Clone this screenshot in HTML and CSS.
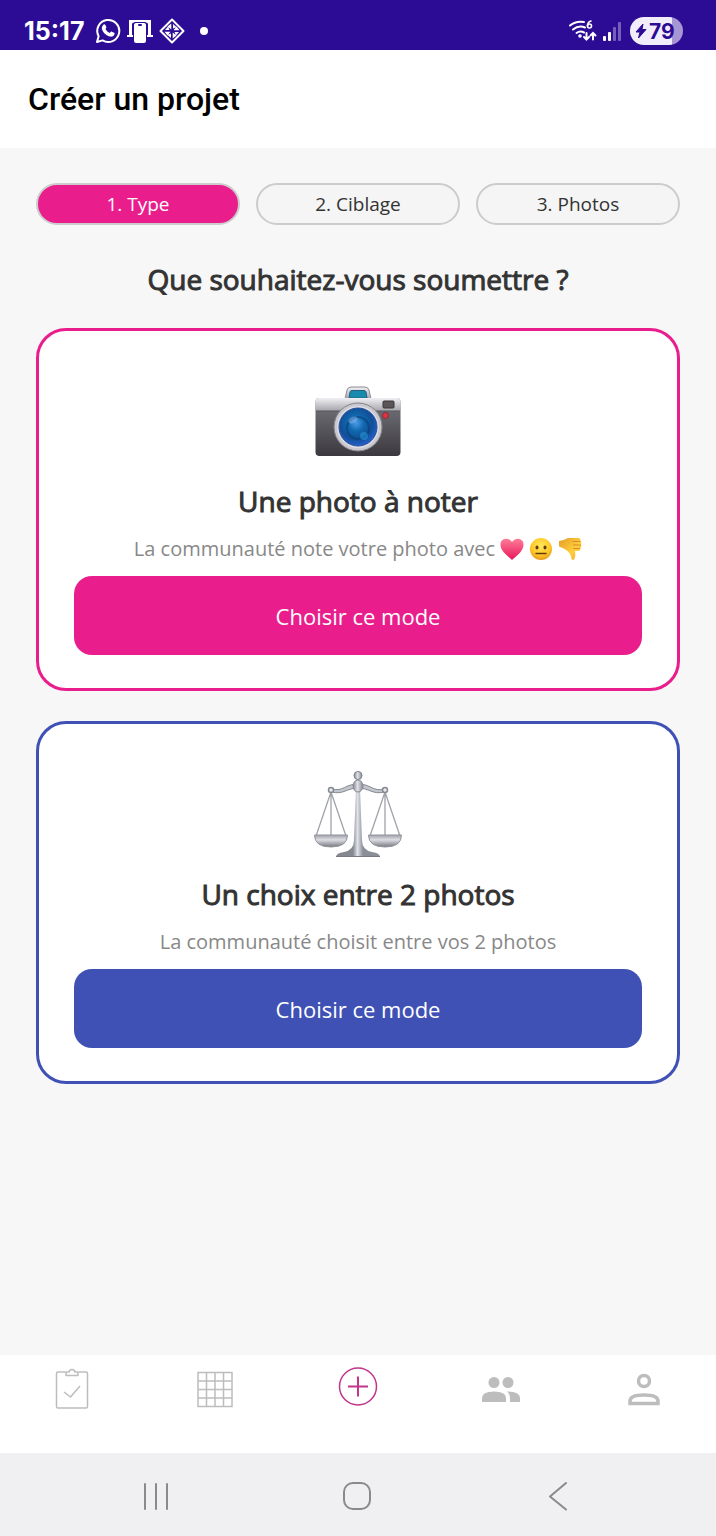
FILE: index.html
```html
<!DOCTYPE html>
<html lang="fr">
<head>
  <meta charset="UTF-8">
  <meta name="viewport" content="width=device-width, initial-scale=1.0">
  <title>Créer un projet</title>
  <link rel="stylesheet" href="styles.css">
</head>
<body>
  <!-- Status bar -->
  <div class="status-bar">
    <div class="status-left">
      <span class="clock">15:17</span>
      <svg width="26" height="26" viewBox="0 0 26 26" fill="none" aria-hidden="true">
        <path d="M2 24l1.600-5.800A11 11 0 1 1 7.600 22.400z" stroke="#fff" stroke-width="2" stroke-linejoin="round"/>
        <path d="M8.600 6.500c.6-.5 1.400-.4 1.700.3l1 2.300c.2.500 0 1-.8 1.900 1.100 2 2.400 3.100 4.400 4 .9-1.200 1.300-1.600 1.900-1.300l2.300 1.100c.7.400.6 1.100.2 2-.6 1.400-2.500 2.200-4.200 1.800-3.800-.9-7.300-4.200-8.200-7.600-.4-1.700.5-3.500 1.700-4.500z" fill="#fff"/>
      </svg>
      <svg width="26" height="26" viewBox="0 0 26 26" aria-hidden="true">
        <path d="M2 2h22v15h2v2H0v-2h2z" fill="#fff"/>
        <path d="M5 17V6q0-1 1-1h14q1 0 1 1v11h-1V8H6v9z" fill="#2c0c94"/>
        <rect x="6" y="4" width="14" height="22" rx="2" fill="#2c0c94"/>
        <rect x="7" y="5" width="12" height="20" rx="2" fill="#fff"/>
        <rect x="11" y="6" width="4" height="2" rx="1" fill="#2c0c94"/>
      </svg>
      <svg width="26" height="26" viewBox="0 0 26 26" aria-hidden="true">
        <path d="M13 1.500L24.500 13 13 24.500 1.500 13z" fill="none" stroke="#fff" stroke-width="2" stroke-linejoin="round"/>
        <path d="M12.300 5.500v6L8.500 8.500zM14 6l3.500 3-3.500 1.500zM20.500 12.300h-6l3-3.800zM20 14l-3 3.500-1.500-3.500zM13.700 20.500v-6l3.800 3zM12 20l-3.500-3 3.500-1.500zM5.500 13.700h6l-3 3.800zM6 12l3-3.500 1.500 3.500z" fill="#fff"/>
      </svg>
      <span class="more-dot"></span>
    </div>
    <div class="status-right">
      <svg width="30" height="24" viewBox="0 0 30 24" fill="none" aria-hidden="true">
        <g stroke="#fff" stroke-width="2" stroke-linecap="round">
          <path d="M2 6.500Q8 1.500 16 3"/>
          <path d="M5 10.500Q10.500 6 17 8.500"/>
          <path d="M8.500 14Q12 11.500 16 13.500"/>
          <path d="M18.500 14v6.500m-2.500-2.500l2.500 2.500 2.500-2.500M25 20.500V14m-2.500 2.500L25 14l2.500 2.500"/>
          <path d="M23 2Q19.500 3 19.500 7" stroke-width="1.600"/>
        </g>
        <circle cx="21.500" cy="7" r="2" stroke="#fff" stroke-width="1.600"/>
        <circle cx="12" cy="17" r="1.800" fill="#fff"/>
      </svg>
      <svg width="20" height="22" viewBox="0 0 20 22" fill="#fff" aria-hidden="true">
        <rect x="1" y="16" width="3" height="5" rx="1"/>
        <rect x="6" y="12" width="3" height="9" rx="1"/>
        <rect x="11" y="7" width="3" height="14" rx="1" opacity=".35"/>
        <rect x="16" y="2" width="3" height="19" rx="1" opacity=".35"/>
      </svg>
      <span class="battery">
        <svg width="12" height="16" viewBox="0 0 12 16" aria-hidden="true">
          <path d="M8 1L1 9h4L3.500 15 11 6.500H7z" fill="#2c0c94" stroke="#2c0c94" stroke-linejoin="round"/>
        </svg>
        79
      </span>
    </div>
  </div>

  <header class="app-header">
    <h1>Créer un projet</h1>
  </header>

  <main>
    <ol class="steps">
      <li class="step active" aria-current="step">1. Type</li>
      <li class="step">2. Ciblage</li>
      <li class="step">3. Photos</li>
    </ol>

    <h2 class="question">Que souhaitez-vous soumettre ?</h2>

    <!-- Single photo mode -->
    <section class="mode-card rating">
      <svg class="mode-icon" viewBox="0 0 88 88" aria-hidden="true">
        <defs>
          <linearGradient id="camTop" x1="0" y1="0" x2="0" y2="1">
            <stop offset="0" stop-color="#f1f0f4"/>
            <stop offset="1" stop-color="#a5a4ab"/>
          </linearGradient>
          <linearGradient id="camBody" x1="0" y1="0" x2="0" y2="1">
            <stop offset="0" stop-color="#77777d"/>
            <stop offset="1" stop-color="#3b393f"/>
          </linearGradient>
          <radialGradient id="lens" cx=".45" cy=".4" r=".6">
            <stop offset="0" stop-color="#4b9be8"/>
            <stop offset=".35" stop-color="#1068ae"/>
            <stop offset=".7" stop-color="#124f97"/>
            <stop offset="1" stop-color="#2460cb"/>
          </radialGradient>
        </defs>
        <path d="M31 22l2-9q1-3 4-3h14q3 0 4 3l2 9z" fill="url(#camTop)" stroke="#8d8c93"/>
        <path d="M35 21l1-6q.3-1.500 2-1.500h12q1.700 0 2 1.500l1 6z" fill="#178caf" stroke="#29627b"/>
        <rect x="1.500" y="21" width="85" height="58" rx="4" fill="url(#camBody)"/>
        <path d="M1.500 34v-9q0-4 4-4h77q4 0 4 4v9z" fill="url(#camTop)"/>
        <path d="M2 34h84" stroke="#58575d"/>
        <rect x="69" y="24" width="11" height="7" rx="1" fill="#5a5559" stroke="#39363b"/>
        <circle cx="71.500" cy="38.500" r="3" fill="#db3445" stroke="#8d2a35"/>
        <circle cx="44" cy="50" r="24" fill="#c9c8ce" stroke="#85848b"/>
        <circle cx="44" cy="50" r="21" fill="#dedde4"/>
        <circle cx="44" cy="50" r="19" fill="url(#lens)" stroke="#294f99"/>
        <circle cx="44" cy="51" r="11" fill="none" stroke="#073f76" stroke-width="2" opacity=".6"/>
        <ellipse cx="39" cy="43" rx="5" ry="3" fill="#a8caff" opacity=".4" transform="rotate(-25 39 43)"/>
        <circle cx="50" cy="59" r="4" fill="#28a1df" opacity=".5"/>
      </svg>
      <h3 class="mode-title">Une photo à noter</h3>
      <p class="mode-text">
        <span>La communauté note votre photo avec</span>
        <svg class="emoji" viewBox="0 0 24 24" role="img" aria-label="Cœur">
          <defs>
            <linearGradient id="heart" x1="0" y1="0" x2="0" y2="1">
              <stop offset="0" stop-color="#ff7c98"/>
              <stop offset="1" stop-color="#e9165b"/>
            </linearGradient>
          </defs>
          <path d="M12 23C8 19 .5 14.500.5 7.500.5 1 8.500-.5 12 5 15.500-.5 23.500 1 23.500 7.500 23.500 14.500 16 19 12 23z" fill="url(#heart)"/>
        </svg>
        <svg class="emoji" viewBox="0 0 24 24" role="img" aria-label="Visage neutre">
          <defs>
            <radialGradient id="face" cx=".5" cy=".35" r=".65">
              <stop offset="0" stop-color="#ffe75c"/>
              <stop offset=".65" stop-color="#ffc928"/>
              <stop offset="1" stop-color="#e8981c"/>
            </radialGradient>
          </defs>
          <circle cx="12" cy="12" r="11" fill="url(#face)"/>
          <ellipse cx="8" cy="10.500" rx="1.500" ry="2" fill="#633b13"/>
          <ellipse cx="16" cy="10.500" rx="1.500" ry="2" fill="#633b13"/>
          <path d="M7 16.500h10" stroke="#633b13" stroke-width="1.500" stroke-linecap="round"/>
        </svg>
        <svg class="emoji" viewBox="0 0 24 24" role="img" aria-label="Pouce vers le bas">
          <defs>
            <linearGradient id="thumb" x1="0" y1="0" x2="1" y2="1">
              <stop offset="0" stop-color="#e49b24"/>
              <stop offset=".6" stop-color="#ffcf3e"/>
              <stop offset="1" stop-color="#efa92d"/>
            </linearGradient>
          </defs>
          <path d="M1 4q5-.5 9-3h10q3 0 2.500 3 1.500 1 .5 3.500 1 2-.5 3.500 0 3-3 3h-2.500q1 4-.5 8-1.500 2-3 0-.5-5-4-8Q6 11 1 9.500z" fill="url(#thumb)"/>
          <path d="M15 4.500h7M15.500 8h7M15.500 11.500h6" stroke="#d78c22" stroke-linecap="round" fill="none"/>
        </svg>
      </p>
      <button type="button" class="mode-btn">Choisir ce mode</button>
    </section>

    <!-- Two photos mode -->
    <section class="mode-card choice">
      <svg class="mode-icon" viewBox="0 0 88 88" aria-hidden="true">
        <defs>
          <linearGradient id="metal" x1="0" y1="0" x2="1" y2="0">
            <stop offset="0" stop-color="#83868f"/>
            <stop offset=".45" stop-color="#dfe2e8"/>
            <stop offset="1" stop-color="#858891"/>
          </linearGradient>
          <linearGradient id="pan" x1="0" y1="0" x2="0" y2="1">
            <stop offset="0" stop-color="#a0a1aa"/>
            <stop offset=".4" stop-color="#dddde4"/>
            <stop offset="1" stop-color="#77777f"/>
          </linearGradient>
          <linearGradient id="post" gradientUnits="userSpaceOnUse" x1="39" y1="0" x2="49" y2="0">
            <stop offset="0" stop-color="#858891"/>
            <stop offset=".45" stop-color="#dfe2e8"/>
            <stop offset="1" stop-color="#8b8e97"/>
          </linearGradient>
        </defs>
        <g fill="none" stroke="#a0a3aa" stroke-width="1.300">
          <path d="M17 22L2 66M17 22v44M17 22l15 44M71 22L56 66M71 22v44M71 22l15 44"/>
        </g>
        <path d="M18 19c11 3 13-5 26-5s15 8 26 5v3c-11 3-15-4-26-4s-15 7-26 4z" fill="#c3c7cd" stroke="#858991"/>
        <circle cx="17" cy="20" r="2.500" fill="#e9eaee" stroke="#858991" stroke-width="1.500"/>
        <circle cx="71" cy="20" r="2.500" fill="#e9eaee" stroke="#858991" stroke-width="1.500"/>
        <path d="M42 19h4l2 51q0 10 10 12 8 1 8 5H22q0-4 8-5 10-2 10-12z" fill="url(#post)"/>
        <path d="M22 86.500h44" stroke="#777a82"/>
        <ellipse cx="44" cy="16" rx="5" ry="6" fill="url(#metal)" stroke="#858991"/>
        <circle cx="44" cy="5.500" r="4" fill="url(#metal)" stroke="#7d8087"/>
        <path d="M.5 65h33q0 12-16.500 12T.5 65zM54.500 65h33q0 12-16.500 12T54.500 65z" fill="url(#pan)" stroke="#92949d"/>
      </svg>
      <h3 class="mode-title">Un choix entre 2 photos</h3>
      <p class="mode-text">La communauté choisit entre vos 2 photos</p>
      <button type="button" class="mode-btn">Choisir ce mode</button>
    </section>
  </main>

  <!-- Tab bar -->
  <nav class="tab-bar" aria-label="Navigation principale">
    <a href="#votes" aria-label="Votes">
      <svg width="40" height="44" viewBox="0 0 40 44" fill="none" stroke="currentColor" stroke-width="1.500" stroke-linejoin="round">
        <path d="M13.500 5H6Q4.500 5 4.500 6.500v33Q4.500 41 6 41h28q1.500 0 1.500-1.500v-33Q35.500 5 34 5h-7.500"/>
        <path d="M14 8.500V5h3q.5-2.500 3-2.500T23 5h3v3.500z"/>
        <path d="M12 25l6.500 5L28 19"/>
      </svg>
    </a>
    <a href="#projets" aria-label="Projets">
      <svg width="40" height="44" viewBox="0 0 40 44" fill="none" stroke="currentColor" stroke-width="1.500">
        <path d="M3 5.500h34v34H3zM3 14h34M3 22.500h34M3 31h34M11.500 5.500v34M20 5.500v34M28.500 5.500v34"/>
      </svg>
    </a>
    <a href="#creer" class="active" aria-label="Créer">
      <svg width="40" height="44" viewBox="0 0 40 44" fill="none" stroke="currentColor" stroke-width="1.500">
        <circle cx="20" cy="19.500" r="18.500"/>
        <path d="M10 19.500h20M20 9.500v20" stroke-width="2"/>
      </svg>
    </a>
    <a href="#communaute" aria-label="Communauté">
      <svg width="40" height="44" viewBox="0 0 40 44" fill="currentColor">
        <circle cx="13" cy="15.500" r="5.500"/>
        <circle cx="27" cy="15.500" r="5.500"/>
        <path d="M1 35v-4q0-6.500 12-6.500T25 31v4zM26 24.500q13 0 13 6.500v4H29v-4q0-4-3-6.500z"/>
      </svg>
    </a>
    <a href="#profil" aria-label="Profil">
      <svg width="40" height="44" viewBox="0 0 40 44" fill="none" stroke="currentColor" stroke-width="3.500">
        <circle cx="20" cy="14" r="5.500"/>
        <path d="M6 36.500V34q0-6 14-6t14 6v2.500z"/>
      </svg>
    </a>
  </nav>

  <!-- System buttons -->
  <div class="system-nav">
    <button type="button" aria-label="Applications récentes">
      <svg width="32" height="32" viewBox="0 0 32 32"><path d="M5 4v25M16 4v25M27 4v25"/></svg>
    </button>
    <button type="button" aria-label="Accueil">
      <svg width="32" height="32" viewBox="0 0 32 32"><rect x="3" y="3" width="26" height="26" rx="9"/></svg>
    </button>
    <button type="button" aria-label="Retour">
      <svg width="32" height="32" viewBox="0 0 32 32"><path d="M24 3L8 16.500 24 29.500"/></svg>
    </button>
  </div>
</body>
</html>
```
FILE: styles.css
```css
* {
  margin: 0;
  padding: 0;
  box-sizing: border-box;
}
:root {
  --pink: #e91e8c;
  --blue: #3f51b5;
  --status: #2c0c94;
  --bg: #f7f7f7;
  --text: #333;
  --muted: #888;
  --icon: #bdbdbd;
}
body {
  display: flex;
  flex-direction: column;
  min-height: 100vh;
  font-family: "Open Sans", sans-serif;
  color: var(--text);
  background: var(--bg);
}
svg {
  display: block;
  flex-shrink: 0;
}
button {
  border: none;
  font: inherit;
  cursor: pointer;
}

/* Status bar */
.status-bar {
  display: flex;
  justify-content: space-between;
  height: 50px;
  padding: 12px 33px 0 24px;
  background: var(--status);
  color: #fff;
  font-family: Inter, sans-serif;
}
.status-left,
.status-right {
  display: flex;
  align-items: center;
}
.status-left {
  gap: 6px;
}
.status-right {
  gap: 4px;
}
.clock {
  margin-right: 5px;
  font-size: 25px;
  font-weight: 700;
}
.more-dot {
  width: 8px;
  height: 8px;
  margin-left: 9px;
  border-radius: 50%;
  background: #fff;
}
.battery {
  display: flex;
  align-items: center;
  gap: 2px;
  width: 53px;
  height: 28px;
  margin-left: 4px;
  padding-left: 5px;
  border-radius: 14px;
  background: linear-gradient(to right, #f1edfb 79%, #a796d4 79%);
  color: var(--status);
  font-size: 21px;
  font-weight: 700;
}

/* Header */
.app-header {
  display: flex;
  align-items: center;
  height: 98px;
  padding: 0 28px;
  background: #fff;
}
.app-header h1 {
  color: #000;
  font-family: Roboto, sans-serif;
  font-size: 32px;
  font-weight: 500;
}

/* Content */
main {
  flex: 1;
  padding: 35px 36px;
}
.steps {
  display: flex;
  gap: 16px;
  list-style: none;
}
.step {
  flex: 1;
  border: 2px solid #ccc;
  border-radius: 21px;
  background: #f5f5f5;
  font-size: 19px;
  line-height: 38px;
  text-align: center;
}
.step.active {
  background: var(--pink);
  color: #fff;
}
.question,
.mode-title {
  font-size: 28px;
  font-weight: 400;
  line-height: 40px;
  text-align: center;
  -webkit-text-stroke: 1px;
}
.question {
  margin: 34px 0 29px;
}

/* Mode cards */
.mode-card {
  display: flex;
  flex-direction: column;
  align-items: center;
  padding: 46px 35px 33px;
  border: 3px solid;
  border-radius: 30px;
  background: #fff;
}
.mode-card + .mode-card {
  margin-top: 30px;
}
.mode-card.rating {
  border-color: var(--pink);
}
.mode-card.choice {
  border-color: var(--blue);
}
.mode-icon {
  width: 88px;
  height: 88px;
  margin-bottom: 16px;
}
.mode-text {
  display: flex;
  align-items: center;
  gap: 5px;
  margin: 14px 0 13px;
  color: var(--muted);
  font-size: 20px;
  line-height: 28px;
}
.emoji {
  width: 24px;
  height: 24px;
}
.mode-btn {
  width: 100%;
  height: 79px;
  border-radius: 18px;
  color: #fff;
  font-size: 22px;
}
.rating .mode-btn {
  background: var(--pink);
}
.choice .mode-btn {
  background: var(--blue);
}

/* Tab bar */
.tab-bar {
  display: flex;
  height: 98px;
  padding-top: 12px;
  background: #fff;
}
.tab-bar a {
  flex: 1;
  display: flex;
  justify-content: center;
  color: var(--icon);
}
.tab-bar a.active {
  color: #c2358b;
}

/* System navigation */
.system-nav {
  display: flex;
  justify-content: space-around;
  align-items: center;
  height: 83px;
  padding: 3px 58px 0 55px;
  background: #f0f0f2;
}
.system-nav button {
  padding: 8px;
  background: none;
}
.system-nav svg {
  fill: none;
  stroke: #8a8a8c;
  stroke-width: 2;
  stroke-linecap: round;
  stroke-linejoin: round;
}
```
